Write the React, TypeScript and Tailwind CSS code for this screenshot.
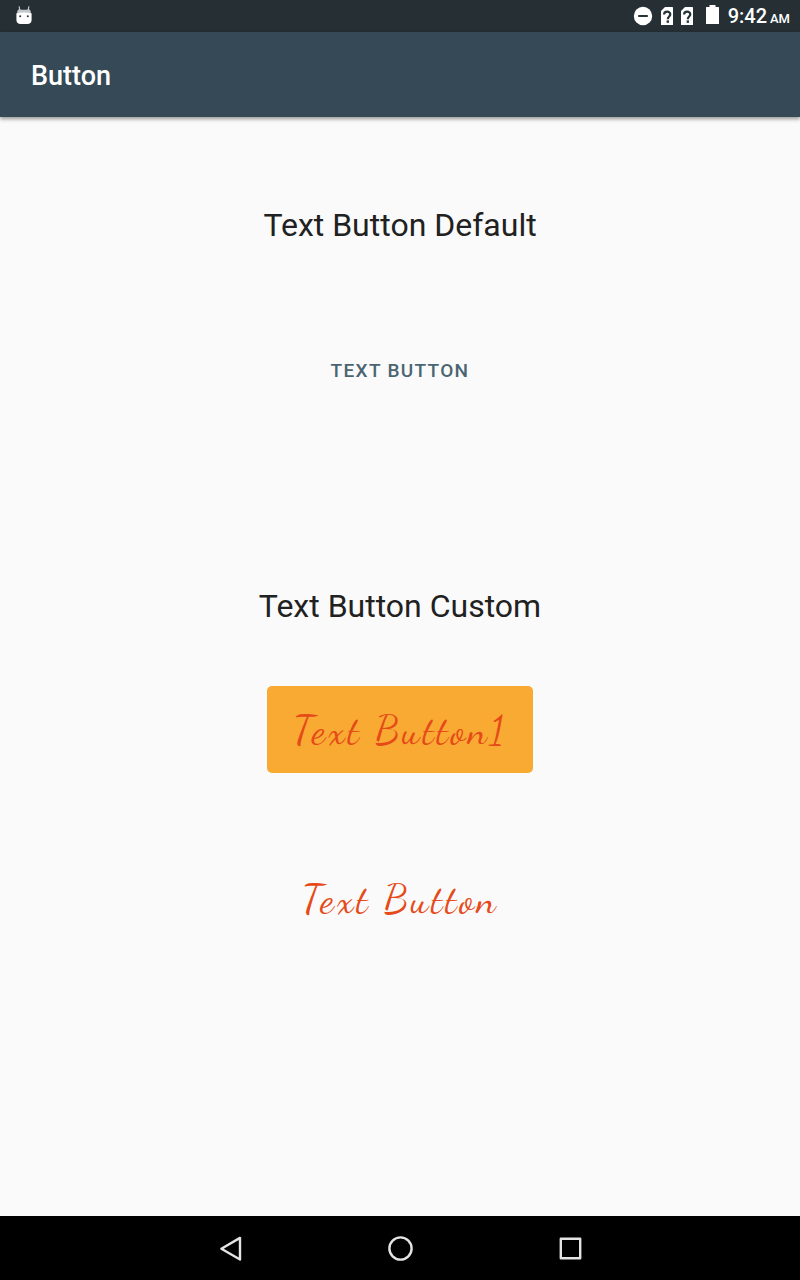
function AndroidHeadIcon() {
  return (
    <svg className="h-5 w-4" viewBox="0 0 16 20" aria-hidden="true">
      <path d="M3.2 .4L3.8 5M12.8 .4L12.2 5" stroke="#c4c8ca" strokeWidth="1.2" fill="none" />
      <path d="M1.2 7.2V6.2C1.2 4.4 2 3.4 3.6 3.2Q8 4.4 12.4 3.2C14 3.4 14.8 4.4 14.8 6.2V7.2Z" fill="#c4c8ca" />
      <path d="M.4 7.2Q8 5.6 15.6 7.2V13.6C15.6 16.8 14.4 17.8 12 18H4C1.6 17.8 .4 16.8 .4 13.6Z" fill="#fff" />
      <circle cx="4.2" cy="10.2" r="1" fill="#263238" />
      <circle cx="11.8" cy="10.2" r="1" fill="#263238" />
    </svg>
  );
}

function DoNotDisturbIcon() {
  return (
    <svg className="h-5 w-5" viewBox="0 0 20 20" aria-hidden="true">
      <circle cx="10" cy="10" r="9.2" fill="#fff" />
      <path d="M5.2 10H14.8" stroke="#263238" strokeWidth="2" />
    </svg>
  );
}

function UnknownSimIcon() {
  return (
    <svg className="h-5 w-3" viewBox="0 0 12 20" aria-hidden="true">
      <path d="M4 1H11.4Q12 1 12 1.6V18.4Q12 19 11.4 19H.6Q0 19 0 18.4V5Z" fill="#fff" />
      <path d="M3.1 8.6C3.1 4.8 9.3 4.8 9.3 8.3C9.3 10.4 6.8 10.6 6.8 13.2" stroke="#263238" strokeWidth="2.2" fill="none" />
      <path d="M5.6 14.4H8V16.8H5.6Z" fill="#263238" />
    </svg>
  );
}

function BatteryIcon() {
  return (
    <svg className="h-5 w-[13px]" viewBox="0 0 13 20" aria-hidden="true">
      <path d="M3.5 0H9.5V2H12.4Q13 2 13 2.6V18.4Q13 19 12.4 19H.6Q0 19 0 18.4V2.6Q0 2 .6 2H3.5Z" fill="#fff" />
    </svg>
  );
}

function StatusBar() {
  return (
    <div className="flex h-8 items-center justify-between bg-[#252f34] pr-[10px] pl-4 text-white">
      <AndroidHeadIcon />
      <div className="flex items-center">
        <DoNotDisturbIcon />
        <div className="ml-2 flex gap-2">
          <UnknownSimIcon />
          <UnknownSimIcon />
        </div>
        <div className="mr-[9px] ml-[13px] pb-[2px]">
          <BatteryIcon />
        </div>
        <p className="flex items-baseline gap-[3px] pt-[3px] leading-6 font-medium">
          <span className="text-[20px]">9:42</span>
          <span className="text-[13px]">AM</span>
        </p>
      </div>
    </div>
  );
}

function NavigationBar() {
  return (
    <nav className="flex h-16 items-center justify-center gap-[138px] bg-black text-[#e4e4e4]">
      <button type="button" aria-label="Back">
        <svg className="h-8 w-8" viewBox="0 0 32 32" fill="none" stroke="currentColor" strokeWidth="2.4" strokeLinejoin="round">
          <path d="M7.4 16.7L26 5.9V27.5Z" />
        </svg>
      </button>
      <button type="button" aria-label="Home">
        <svg className="h-8 w-8" viewBox="0 0 32 32" fill="none" stroke="currentColor" strokeWidth="2.4">
          <circle cx="16.5" cy="16.5" r="11.1" />
        </svg>
      </button>
      <button type="button" aria-label="Overview">
        <svg className="h-8 w-8" viewBox="0 0 32 32" fill="none" stroke="currentColor" strokeWidth="2.4" strokeLinejoin="round">
          <path d="M6.8 6.8H26.2V26.2H6.8Z" />
        </svg>
      </button>
    </nav>
  );
}

export default function App() {
  return (
    <div className="flex min-h-screen flex-col bg-[#fafafa] font-['Roboto',sans-serif]">
      <StatusBar />
      <header className="flex h-[85px] items-center bg-[#364956] px-[31px] pt-[2px] text-white shadow-[0_2px_4px_rgba(0,0,0,0.4)]">
        <h1 className="text-[27px] leading-8 font-medium">Button</h1>
      </header>
      <main className="flex flex-1 flex-col items-center">
        <h2 className="mt-[88px] text-[32px] leading-10 text-[#212121]">Text Button Default</h2>
        <button type="button" className="mt-[94px] h-16 rounded px-4 text-[19px] font-medium tracking-[0.07em] text-[#4a6572] uppercase">
          Text Button
        </button>
        <h2 className="mt-[183px] text-[32px] leading-10 text-[#212121]">Text Button Custom</h2>
        <button type="button" className="mt-[60px] h-[87px] rounded-[5px] bg-[#f9aa33] px-[26px] font-['Dancing_Script',cursive] text-[40px] tracking-[0.07em] text-[#e64a19]">
          Text Button1
        </button>
        <button type="button" className="mt-[82px] h-[87px] rounded-[5px] px-[26px] font-['Dancing_Script',cursive] text-[40px] tracking-[0.07em] text-[#e64a19]">
          Text Button
        </button>
      </main>
      <NavigationBar />
    </div>
  );
}
